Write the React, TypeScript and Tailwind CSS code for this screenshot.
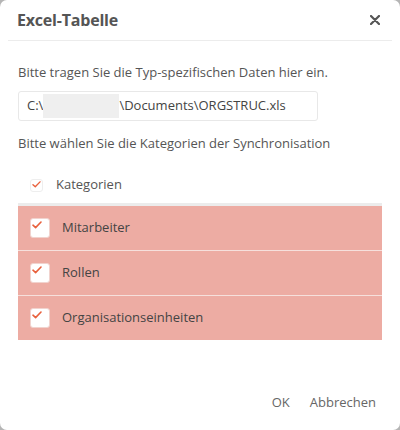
import React from 'react';

const Check: React.FC<{ className?: string }> = ({ className = '' }) => (
  <svg viewBox="0 0 10 8" className={className} fill="none">
    <path d="M1 4.2 L3.6 6.6 L9 1" stroke="#e8603c" strokeWidth="1.6" strokeLinecap="round" strokeLinejoin="round" />
  </svg>
);

const rows = ['Mitarbeiter', 'Rollen', 'Organisationseinheiten'];

export default function App() {
  return (
    <div className="w-[400px] h-[430px] bg-[#b5b5b5]" style={{ fontFamily: '"Open Sans", "Liberation Sans", sans-serif' }}>
      <div className="w-full h-full bg-white rounded-[7px] flex flex-col text-[#555]">
        {/* Header */}
        <div className="mx-2 h-[41px] flex items-center justify-between border-b border-[#ececec] pl-[9px] pr-[12px]">
          <h2 className="text-[16px] font-bold text-[#555] tracking-[-0.2px]">Excel-Tabelle</h2>
          <svg viewBox="0 0 10 10" className="w-[10px] h-[10px]">
            <path d="M1 1 L9 9 M9 1 L1 9" stroke="#555" strokeWidth="2.2" strokeLinecap="round" />
          </svg>
        </div>

        {/* Body */}
        <div className="px-[18px] flex-1">
          <p className="text-[13px] mt-[21px] leading-[20px]">Bitte tragen Sie die Typ-spezifischen Daten hier ein.</p>

          <div className="mt-[9px] w-[300px] h-[30px] border border-[#e8e8e8] rounded-[3px] flex items-center pl-[8px] text-[13px] text-[#444]">
            <span>C:\</span>
            <span className="inline-block w-[76px] h-[24px] bg-[#efefef]" />
            <span>\Documents\ORGSTRUC.xls</span>
          </div>

          <p className="text-[13px] mt-[12px] leading-[20px]">Bitte wählen Sie die Kategorien der Synchronisation</p>

          <div className="mt-[20px] h-[24px] flex items-center pl-[12px]">
            <div className="relative w-[13px] h-[13px] border border-[#eee] rounded-[3px] bg-white">
              <Check className="absolute left-[1px] top-[1px] w-[9px] h-[7px]" />
            </div>
            <span className="ml-[13px] text-[13px]">Kategorien</span>
          </div>

          <div className="mt-[6px] w-[364px] border-t-[3px] border-[#ececec]">
            {rows.map((label, i) => (
              <div
                key={label}
                className={`bg-[#edaca3] flex items-center pl-[12px] ${i > 0 ? 'h-[45px] border-t border-[#f6e0dc]' : 'h-[44px]'}`}
              >
                <div className="relative w-[20px] h-[20px] bg-white rounded-[3px] border border-[#f1d3ce]">
                  <Check className="absolute left-[1px] top-[2px] w-[10px] h-[8px]" />
                </div>
                <span className="ml-[12px] text-[13px] text-[#444]">{label}</span>
              </div>
            ))}
          </div>
        </div>

        {/* Footer */}
        <div className="h-[38px] flex items-start justify-end pr-[24px] gap-[20px] text-[13px] leading-[20px] text-[#666]">
          <button>OK</button>
          <button>Abbrechen</button>
        </div>
      </div>
    </div>
  );
}
